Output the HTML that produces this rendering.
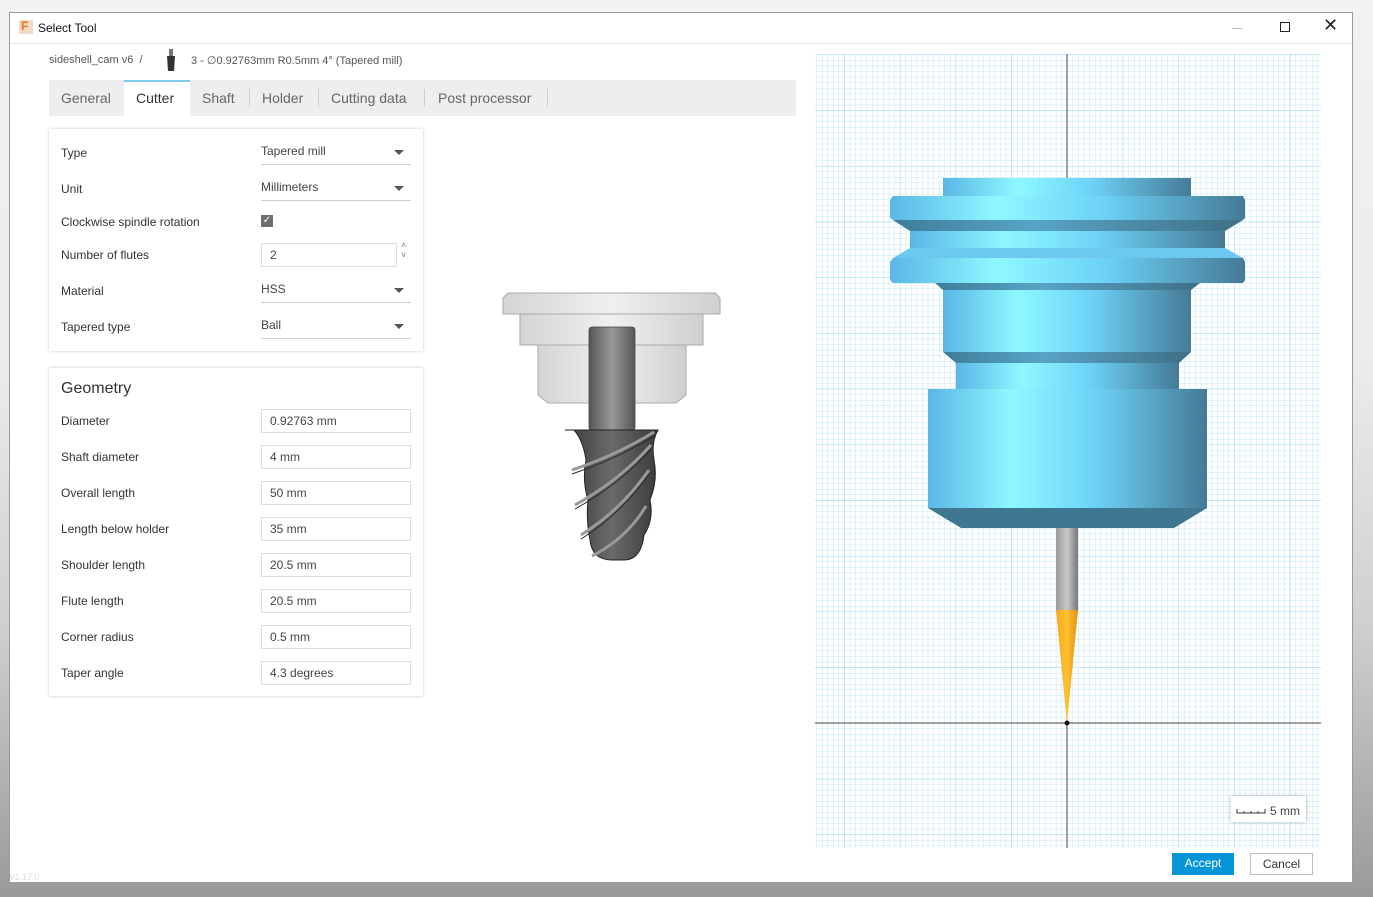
<!DOCTYPE html>
<html><head><meta charset="utf-8">
<style>
*{box-sizing:border-box;margin:0;padding:0}
body{width:1373px;height:897px;overflow:hidden;position:relative;font-family:"Liberation Sans",sans-serif;font-size:12px;color:#3c3c3c;background:linear-gradient(180deg,#f2f2f2 0%,#ececec 40%,#cfcfcf 70%,#9a9a9a 100%)}
.win{position:absolute;left:9px;top:12px;width:1344px;height:871px;background:#fff;border:1px solid #9a9a9a}
.title{position:absolute;left:0;top:0;width:100%;height:31px;border-bottom:1px solid #e6e6e6}
.title .t{position:absolute;left:28px;top:8px;font-size:12px;color:#111}
.logo{position:absolute;left:9px;top:7px;width:14px;height:14px;background:#f3d9c4}
.logo:after{content:"F";position:absolute;left:2px;top:-1px;font-weight:bold;color:#e8761f;font-size:12px}
.ab{position:absolute}
.tabs{position:absolute;left:39px;top:67px;width:747px;height:36px;background:#eeeeee}
.tab{position:absolute;top:0;height:36px;line-height:36px;font-size:14px;color:#666}
.sep{position:absolute;top:9px;width:1px;height:18px;background:#ccc}
.card{position:absolute;background:#fff;box-shadow:0 0 3px rgba(0,0,0,.22)}
.lbl{position:absolute;left:12px;font-size:12px;color:#333}
.sel{position:absolute;left:212px;width:150px;height:24px;border-bottom:1px solid #cfcfcf;color:#444;line-height:20px}
.sel:after{content:"";position:absolute;right:7px;top:9px;border-left:5px solid transparent;border-right:5px solid transparent;border-top:5px solid #555}
.inp{position:absolute;left:212px;width:150px;height:24px;border:1px solid #ddd;line-height:22px;padding-left:8px;color:#444}
.btn{position:absolute;height:22px;line-height:20px;text-align:center;font-size:12px}
</style></head><body>
<div class="win">
 <div class="title"><div class="logo"></div><div class="t">Select Tool</div>
  <div class="ab" style="left:1222px;top:15px;width:10px;height:1px;background:#bbb"></div>
  <div class="ab" style="left:1270px;top:9px;width:10px;height:10px;border:1px solid #222"></div>
  <div class="ab" style="left:1313px;top:2px;font-size:18px;color:#222">✕</div>
 </div>
 <div class="ab" style="left:39px;top:41px;color:#555;font-size:11px">sideshell_cam v6 &nbsp;/</div>
 <svg class="ab" style="left:154px;top:36px" width="14" height="24"><rect x="5" y="0" width="4" height="7" fill="#777"/><path d="M3 7h8l-1 15H4z" fill="#333"/></svg>
 <div class="ab" style="left:181px;top:41px;color:#555;font-size:11px">3 - ∅0.92763mm R0.5mm 4° (Tapered mill)</div>
 <div class="tabs">
  <div class="tab" style="left:12px">General</div>
  <div class="ab" style="left:75px;top:0;width:66px;height:36px;background:#fff;border-top:2px solid #7ec8ea"></div>
  <div class="tab" style="left:87px;color:#333">Cutter</div>
  <div class="tab" style="left:153px">Shaft</div><div class="sep" style="left:200px"></div>
  <div class="tab" style="left:213px">Holder</div><div class="sep" style="left:269px"></div>
  <div class="tab" style="left:282px">Cutting data</div><div class="sep" style="left:375px"></div>
  <div class="tab" style="left:389px">Post processor</div><div class="sep" style="left:498px"></div>
 </div>
 <div class="card" style="left:39px;top:116px;width:374px;height:222px">
  <div class="lbl" style="top:17px">Type</div><div class="sel" style="top:12px">Tapered mill</div>
  <div class="lbl" style="top:53px">Unit</div><div class="sel" style="top:48px">Millimeters</div>
  <div class="lbl" style="top:86px">Clockwise spindle rotation</div>
  <div class="ab" style="left:212px;top:86px;width:12px;height:12px;background:#6e6e6e;color:#fff;font-size:10px;line-height:12px;text-align:center">✓</div>
  <div class="lbl" style="top:119px">Number of flutes</div><div class="inp" style="top:114px;width:136px">2</div>
  <div class="ab" style="left:352px;top:111px;font-size:9px;color:#777;line-height:10px">˄<br>˅</div>
  <div class="lbl" style="top:155px">Material</div><div class="sel" style="top:150px">HSS</div>
  <div class="lbl" style="top:191px">Tapered type</div><div class="sel" style="top:186px">Ball</div>
 </div>
 <div class="card" style="left:39px;top:355px;width:374px;height:328px">
  <div class="lbl" style="top:12px;font-size:16px;color:#333">Geometry</div>
  <div class="lbl" style="top:46px">Diameter</div><div class="inp" style="top:41px">0.92763 mm</div>
  <div class="lbl" style="top:82px">Shaft diameter</div><div class="inp" style="top:77px">4 mm</div>
  <div class="lbl" style="top:118px">Overall length</div><div class="inp" style="top:113px">50 mm</div>
  <div class="lbl" style="top:154px">Length below holder</div><div class="inp" style="top:149px">35 mm</div>
  <div class="lbl" style="top:190px">Shoulder length</div><div class="inp" style="top:185px">20.5 mm</div>
  <div class="lbl" style="top:226px">Flute length</div><div class="inp" style="top:221px">20.5 mm</div>
  <div class="lbl" style="top:262px">Corner radius</div><div class="inp" style="top:257px">0.5 mm</div>
  <div class="lbl" style="top:298px">Taper angle</div><div class="inp" style="top:293px">4.3 degrees</div>
 </div>
 <div class="btn" style="left:1162px;top:840px;width:62px;background:#0696d7;color:#fff">Accept</div>
 <div class="btn" style="left:1240px;top:840px;width:63px;border:1px solid #bbb;color:#333">Cancel</div>
</div>
<svg class="ab" style="left:0;top:0" width="1373" height="897">
 <defs>
  <pattern id="mi" x="1067" y="723" width="5.57" height="5.57" patternUnits="userSpaceOnUse"><path d="M0 0H5.57M0 0V5.57" stroke="#bfe6f5" stroke-width="1" fill="none"/></pattern>
  <pattern id="ma" x="1067" y="723" width="55.7" height="55.7" patternUnits="userSpaceOnUse"><path d="M0 0H55.7M0 0V55.7" stroke="#9fd7ee" stroke-width="1" fill="none"/></pattern>
  <linearGradient id="b" x1="0" x2="1"><stop offset="0" stop-color="#5ab6e6"/><stop offset=".3" stop-color="#8ef8ff"/><stop offset=".6" stop-color="#6dd2f8"/><stop offset="1" stop-color="#457a95"/></linearGradient>
  <linearGradient id="d" x1="0" x2="1"><stop offset="0" stop-color="#3e7d99"/><stop offset=".4" stop-color="#58a4c6"/><stop offset="1" stop-color="#3f6f86"/></linearGradient>
  <linearGradient id="g" x1="0" x2="1"><stop offset="0" stop-color="#999"/><stop offset=".5" stop-color="#c8c8c8"/><stop offset="1" stop-color="#777"/></linearGradient>
  <linearGradient id="o" x1="0" x2="1"><stop offset="0" stop-color="#f5a81a"/><stop offset=".5" stop-color="#ffc030"/><stop offset="1" stop-color="#e09010"/></linearGradient>
  <linearGradient id="lg" x1="0" x2="1"><stop offset="0" stop-color="#d4d4d4"/><stop offset=".5" stop-color="#f0f0f0"/><stop offset="1" stop-color="#cfcfcf"/></linearGradient>
  <linearGradient id="sh" x1="0" x2="1"><stop offset="0" stop-color="#555"/><stop offset=".5" stop-color="#999"/><stop offset="1" stop-color="#555"/></linearGradient>
  <linearGradient id="fl" x1="0" x2="1"><stop offset="0" stop-color="#3a3a3a"/><stop offset=".5" stop-color="#6a6a6a"/><stop offset="1" stop-color="#3a3a3a"/></linearGradient>
 </defs>
 <rect x="815" y="54" width="506" height="794" fill="url(#mi)"/>
 <rect x="815" y="54" width="506" height="794" fill="url(#ma)"/>
 <line x1="1067" y1="54" x2="1067" y2="848" stroke="#444" stroke-width="1"/>
 <line x1="815" y1="723" x2="1321" y2="723" stroke="#444" stroke-width="1"/>
 <rect x="943" y="178" width="248" height="18" fill="url(#b)"/>
 <path d="M893 196H1243l2 4v18l-2 2H893l-3-2V200z" fill="url(#b)"/>
 <path d="M893 220H1243l-18 11H910z" fill="url(#d)"/>
 <rect x="910" y="231" width="315" height="17" fill="url(#b)"/>
 <path d="M910 248H1225l18 10H893z" fill="#6cc8ee"/>
 <path d="M893 258H1243l2 4v18l-2 3H893l-3-3V262z" fill="url(#b)"/>
 <path d="M935 283H1200l-9 7H943z" fill="url(#d)"/>
 <rect x="943" y="290" width="248" height="62" fill="url(#b)"/>
 <path d="M943 352H1191l-12 11H956z" fill="url(#d)"/>
 <rect x="956" y="363" width="223" height="26" fill="url(#b)"/>
 <rect x="928" y="389" width="279" height="119" fill="url(#b)"/>
 <path d="M928 508H1207l-33 20H961z" fill="#3f7690"/>
 <rect x="1056" y="528" width="22" height="82" fill="url(#g)"/>
 <path d="M1056 610H1078L1067 723z" fill="url(#o)"/>
 <circle cx="1067" cy="723" r="2.5" fill="#111"/>
 <rect x="1231" y="796" width="75" height="26" fill="#fff" style="filter:drop-shadow(0 0 2px rgba(0,0,0,.25))"/>
 <path d="M1237 809v4h28v-4M1244 811v2M1251 811v2M1258 811v2" stroke="#333" fill="none"/>
 <text x="1270" y="815" font-family="Liberation Sans" font-size="12" fill="#444">5 mm</text>
 <!-- left tool -->
 <path d="M508 293H715l5 5v16H503v-16z" fill="url(#lg)" stroke="#aaa"/>
 <rect x="520" y="314" width="183" height="31" fill="url(#lg)" stroke="#aaa"/>
 <path d="M538 345H686v50l-10 8H548l-10-8z" fill="url(#lg)" stroke="#aaa"/>
 <rect x="589" y="327" width="46" height="103" rx="3" fill="url(#sh)" stroke="#444" stroke-width=".8"/>
 <path d="M565 430H658q-7 12-4 30q4 20-4 40q4 20-6 35q-3 25-20 25h-12q-20 0-22-20q-4-20-2-40q-6-20-2-40q-3-20-12-30z" fill="url(#fl)" stroke="#222"/>
 <path d="M572 470q45-15 82-38M575 505q45-25 76-60M581 535q40-25 68-65M592 556q35-18 54-50" stroke="#9a9a9a" stroke-width="3" fill="none"/>
 <path d="M572 470q45-15 82-38M575 505q45-25 76-60M581 535q40-25 68-65" stroke="#2a2a2a" stroke-width="1" fill="none" transform="translate(0 4)"/>
</svg>
<div class="ab" style="left:10px;top:872px;font-size:9px;color:#ddd">v1.17.0</div>
</body></html>
